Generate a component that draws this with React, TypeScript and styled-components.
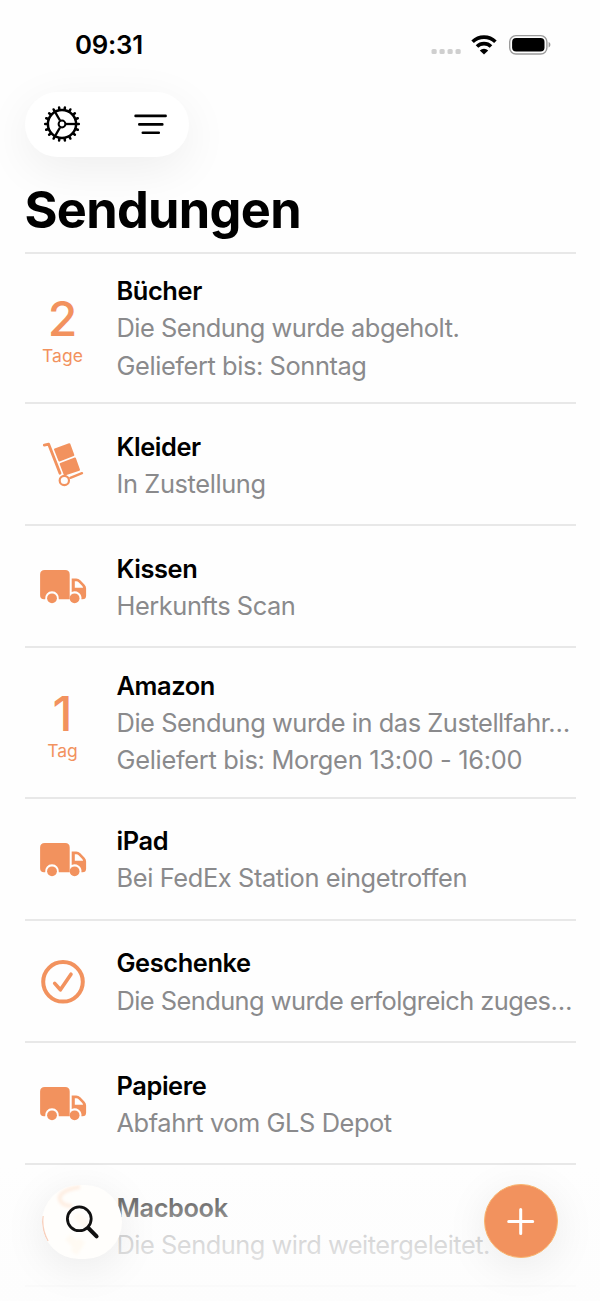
import React from 'react';
import styled, { createGlobalStyle } from 'styled-components';

const ORANGE = '#f2925e';

const GlobalStyle = createGlobalStyle`
  * { box-sizing: border-box; }
  body { margin: 0; background: #fefefe; }
`;

const Screen = styled.main`
  position: relative;
  display: flex;
  flex-direction: column;
  width: 600px;
  height: 1301px;
  overflow: hidden;
  background: #fefefe;
  color: #000;
  font-family: Inter, 'Liberation Sans', sans-serif;
`;

const StatusBar = styled.header`
  display: flex;
  align-items: center;
  justify-content: space-between;
  height: 92px;
  padding: 0 48px 3px 75px;
`;

const Clock = styled.time`
  font-size: 25.8px;
  font-weight: 600;
  letter-spacing: -0.25px;
`;

const StatusIcons = styled.div`
  display: flex;
  align-items: center;
`;

const Toolbar = styled.nav`
  display: flex;
  align-items: center;
  width: 164px;
  height: 65px;
  margin-left: 25px;
  padding: 0 20px 1px 18px;
  justify-content: space-between;
  border-radius: 33px;
  background: #fff;
  box-shadow: 0 12px 48px rgba(0, 0, 0, 0.065);
`;

const PlainButton = styled.button`
  display: flex;
  padding: 0;
  border: 0;
  background: none;
  color: inherit;
`;

const Title = styled.h1`
  margin: 22px 0 0 24.5px;
  height: 73px;
  font-size: 50.5px;
  line-height: 62px;
  font-weight: 700;
  letter-spacing: -0.7px;
`;

const List = styled.ul`
  flex: none;
  margin: 0 24px 0 25px;
  padding: 0;
  list-style: none;
  border-top: 2px solid #e8e8e8;
`;

const Row = styled.li<{ $tall?: boolean }>`
  display: grid;
  grid-template-columns: 75px 1fr;
  column-gap: 16.5px;
  align-items: center;
  height: ${p => (p.$tall ? 150.2 : 122.15)}px;
  border-bottom: 2px solid #e8e8e8;
`;

const Marker = styled.div`
  display: flex;
  flex-direction: column;
  align-items: center;
  color: ${ORANGE};
`;

const Count = styled.span`
  font-size: 48px;
  line-height: 48px;
  margin-top: 7px;
  font-weight: 450;
`;

const Unit = styled.span`
  font-size: 17.5px;
  line-height: 25px;
`;

const Copy = styled.div<{ $tall?: boolean }>`
  min-width: 0;
  padding-top: ${p => (p.$tall ? 0 : 1.4)}px;
  font-size: 25.4px;
  line-height: 37.2px;
  white-space: nowrap;
`;

const Name = styled.div`
  font-weight: 600;
  letter-spacing: -0.4px;
`;

const Detail = styled.div<{ $track?: number }>`
  color: #8a8a8c;
  letter-spacing: ${p => p.$track ?? -0.44}px;
`;

const Fade = styled.div`
  position: absolute;
  left: 0;
  right: 0;
  bottom: 0;
  height: 135px;
  background: linear-gradient(
    rgba(253, 253, 253, 0) 0%,
    rgba(253, 253, 253, 0.4) 22%,
    rgba(253, 253, 253, 0.58) 40%,
    rgba(253, 253, 253, 0.7) 60%,
    rgba(253, 253, 253, 0.86) 88%,
    rgba(253, 253, 253, 0.9) 100%
  );
`;

const SearchButton = styled.button`
  position: absolute;
  left: 42px;
  top: 1185px;
  display: flex;
  padding: 0;
  border: 0;
  border-radius: 37px;
  background: #fffefc;
  box-shadow: 0 8px 44px rgba(0, 0, 0, 0.08);
`;

const AddButton = styled.button`
  position: absolute;
  left: 484px;
  top: 1184px;
  display: flex;
  width: 74px;
  height: 74px;
  padding: 0;
  align-items: center;
  justify-content: center;
  border: 1px solid #f9b56f;
  border-radius: 50%;
  background: ${ORANGE};
  box-shadow: 0 8px 44px rgba(0, 0, 0, 0.08);
`;

const WifiGlyph = styled.svg`
  margin-left: 7px;
`;

const BatteryGlyph = styled.svg`
  margin-left: 10px;
`;

const GearIcon = () => (
  <svg width="38" height="38" viewBox="-19 -19 38 38" fill="none" stroke="#000">
    <circle r="14.1" strokeWidth="2.5" />
    {Array.from({ length: 18 }, (_, i) => (
      <path key={i} d="M14.5 0H16.8" strokeWidth="2.5" strokeLinecap="round" transform={`rotate(${i * 20})`} />
    ))}
    <circle r="3.4" strokeWidth="2" />
    {[0, 120, 240].map(a => (
      <path key={a} d="M4 0H14" strokeWidth="2.3" transform={`rotate(${a})`} />
    ))}
  </svg>
);

const FilterIcon = () => (
  <svg width="36" height="24" viewBox="0 0 36 24" stroke="#000" strokeWidth="2.6" strokeLinecap="round">
    <path d="M2.6 3.9H32.6M6.3 12.4H29.3M9.8 20.7H25.8" />
  </svg>
);

const SignalDots = () => (
  <svg width="32" height="30" viewBox="0.5 0 32 30" fill="#cfcfcf">
    {[1, 9, 17, 25].map(x => (
      <rect key={x} x={x} y="18.9" width="5.2" height="5.2" rx="1.6" />
    ))}
  </svg>
);

const WifiIcon = () => (
  <WifiGlyph width="28" height="22" viewBox="0 0 28 22" fill="none" stroke="#000">
    <path d="M2.6 7.8A16.2 16.2 0 0 1 25.4 7.8" strokeWidth="3.6" />
    <path d="M7 12.5A9.9 9.9 0 0 1 21 12.5" strokeWidth="3.6" />
    <path d="M14 20.6L9.8 16.4A6 6 0 0 1 18.2 16.4Z" fill="#000" stroke="none" />
  </WifiGlyph>
);

const BatteryIcon = () => (
  <BatteryGlyph width="44" height="22" viewBox="0 0 44 22">
    <rect x="1.7" y="1.6" width="37.2" height="18.4" rx="6.2" fill="none" stroke="#9b9b9b" strokeWidth="1.4" />
    <rect x="4.1" y="4" width="32.4" height="13.6" rx="4" fill="#000" />
    <path d="M40.6 8.1C43 8.8 43 12.8 40.6 13.5Z" fill="#999" />
  </BatteryGlyph>
);

const TruckIcon = () => (
  <svg width="50" height="38" viewBox="-0.8 -1 50 38" fill={ORANGE}>
    <path d="M6 2H26.4Q30.9 2 30.9 6.6V31.3H20A6.9 6.9 0 1 0 6.4 31.3H5.2Q1.3 31.3 1.3 27.3V6.6Q1.3 2 6 2Z" />
    <path
      fillRule="evenodd"
      d="M32.9 10.6H37.4Q39.8 10.6 41.5 12.3L45.8 16.8Q47.3 18.4 47.3 20.5V27.7Q47.3 31.3 43.7 31.3H42.6A6.9 6.9 0 0 0 32.9 23.9ZM36 13.2V19.8H44.3Q44.1 18.7 43.2 17.8L39.8 14.3Q38.8 13.2 37.6 13.2Z"
    />
    <circle cx="13.2" cy="30.3" r="4.9" />
    <circle cx="35.8" cy="30.3" r="4.9" />
  </svg>
);

const HandTruckIcon = () => (
  <svg width="44" height="48" viewBox="33 29.5 132 144" fill="none" stroke={ORANGE}>
    <path d="M43 45L56 42L90 129" strokeWidth="8.5" strokeLinecap="round" strokeLinejoin="round" />
    <g fill={ORANGE} strokeWidth="6" strokeLinejoin="round">
      <path d="M75 58L118 42L130 75L88 91Z" />
      <path d="M92 101L135 85L147 119L104 133Z" />
    </g>
    <circle cx="103" cy="151" r="14" strokeWidth="6.5" />
    <path d="M121 143L156 129" strokeWidth="7" strokeLinecap="round" />
  </svg>
);

const DeliveredIcon = () => (
  <svg width="46" height="46" viewBox="0 -0.8 46 46" fill="none" stroke={ORANGE} strokeLinecap="round" strokeLinejoin="round">
    <circle cx="23" cy="23" r="19.8" strokeWidth="4" />
    <path d="M14.7 24.6L20.4 31L31 15.4" strokeWidth="3.6" />
  </svg>
);

const SearchIcon = () => (
  <svg width="80" height="74" viewBox="0 0 80 74" fill="none">
    <defs>
      <filter id="soft" x="-50%" y="-50%" width="200%" height="200%">
        <feGaussianBlur stdDeviation="1.6" />
      </filter>
      <clipPath id="lens">
        <rect width="80" height="74" rx="37" />
      </clipPath>
    </defs>
    <g clipPath="url(#lens)">
      <g filter="url(#soft)">
        <path d="M38 2C23 4 16 10 18 15C20 20 24 21 30 21" stroke="#feeee2" strokeWidth="4" />
        <path d="M26 52L38 64M32 68L40 55M34 30L46 42" stroke="#fffaf3" strokeWidth="8" />
      </g>
      <path d="M1 31C-0.2 40 1.5 48 6 56" stroke="#f8d0bd" strokeWidth="1.5" />
    </g>
    <g stroke="#111" strokeLinecap="round">
      <circle cx="37.3" cy="33.8" r="11.9" strokeWidth="2.8" />
      <path d="M46.3 43L54.6 51.3" strokeWidth="4" />
    </g>
  </svg>
);

const PlusIcon = () => (
  <svg width="30" height="30" viewBox="0 0 30 30" stroke="#fff" strokeWidth="3" strokeLinecap="round">
    <path d="M14.7 3.5V27.5M2.7 15.5H26.7" />
  </svg>
);

type Shipment = {
  name: string;
  lines: { text: string; track?: number }[];
  icon?: React.ReactNode;
  count?: number;
  unit?: string;
};

const shipments: Shipment[] = [
  {
    name: 'Bücher',
    count: 2,
    unit: 'Tage',
    lines: [{ text: 'Die Sendung wurde abgeholt.', track: -0.48 }, { text: 'Geliefert bis: Sonntag', track: -0.41 }],
  },
  { name: 'Kleider', icon: <HandTruckIcon />, lines: [{ text: 'In Zustellung', track: -0.38 }] },
  { name: 'Kissen', icon: <TruckIcon />, lines: [{ text: 'Herkunfts Scan' }] },
  {
    name: 'Amazon',
    count: 1,
    unit: 'Tag',
    lines: [
      { text: 'Die Sendung wurde in das Zustellfahr…', track: -0.44 },
      { text: 'Geliefert bis: Morgen 13:00 - 16:00', track: -0.29 },
    ],
  },
  { name: 'iPad', icon: <TruckIcon />, lines: [{ text: 'Bei FedEx Station eingetroffen', track: -0.38 }] },
  { name: 'Geschenke', icon: <DeliveredIcon />, lines: [{ text: 'Die Sendung wurde erfolgreich zuges…', track: -0.55 }] },
  { name: 'Papiere', icon: <TruckIcon />, lines: [{ text: 'Abfahrt vom GLS Depot', track: -0.42 }] },
  { name: 'Macbook', lines: [{ text: 'Die Sendung wird weitergeleitet.', track: -0.48 }] },
];

export default function App() {
  return (
    <Screen>
      <GlobalStyle />
      <StatusBar>
        <Clock>09:31</Clock>
        <StatusIcons>
          <SignalDots />
          <WifiIcon />
          <BatteryIcon />
        </StatusIcons>
      </StatusBar>
      <Toolbar>
        <PlainButton aria-label="Einstellungen"><GearIcon /></PlainButton>
        <PlainButton aria-label="Filter"><FilterIcon /></PlainButton>
      </Toolbar>
      <Title>Sendungen</Title>
      <List>
        {shipments.map(s => {
          const tall = s.lines.length > 1;
          return (
            <Row key={s.name} $tall={tall}>
              <Marker>
                {s.icon}
                {s.count && <Count>{s.count}</Count>}
                {s.unit && <Unit>{s.unit}</Unit>}
              </Marker>
              <Copy $tall={tall}>
                <Name>{s.name}</Name>
                {s.lines.map(l => (
                  <Detail key={l.text} $track={l.track}>{l.text}</Detail>
                ))}
              </Copy>
            </Row>
          );
        })}
      </List>
      <Fade />
      <SearchButton aria-label="Suchen"><SearchIcon /></SearchButton>
      <AddButton aria-label="Hinzufügen"><PlusIcon /></AddButton>
    </Screen>
  );
}
